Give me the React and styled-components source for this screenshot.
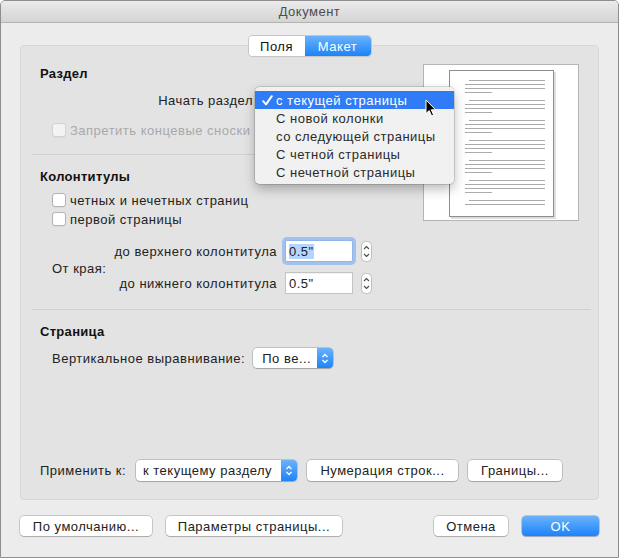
import React from 'react';
import styled, { createGlobalStyle } from 'styled-components';

const GlobalStyle = createGlobalStyle`
  html, body { margin: 0; padding: 0; background: #ffffff; }
  body {
    font-family: "Liberation Sans", Arial, sans-serif;
    font-size: 13px;
    letter-spacing: 0.5px;
    color: #222222;
  }
  * { box-sizing: border-box; }
`;

const startOptions = [
    'с текущей страницы',
    'С новой колонки',
    'со следующей страницы',
    'С четной страницы',
    'С нечетной страницы',
];

// page preview: 7 paragraphs, the last one cut short
const previewGroups = [4, 4, 4, 4, 4, 4, 2];

const Window = styled.div`
  width: 619px;
  height: 558px;
  border: 1px solid #8e8e8e;
  border-radius: 5px 5px 0 0;
  background: #ececec;
  display: flex;
  flex-direction: column;
  overflow: hidden;
`;

const TitleBar = styled.div`
  height: 22px;
  flex-shrink: 0;
  background: linear-gradient(#ebebeb, #d4d4d4);
  border-bottom: 1px solid #b3b3b3;
  display: flex;
  align-items: center;
  justify-content: center;
  color: #4d4d4d;
`;

const Body = styled.div`
  display: flex;
  flex-direction: column;
  padding: 13px 19px 0;
`;

const Tabs = styled.div`
  align-self: center;
  display: flex;
  height: 20px;
  margin-bottom: -11px;
  position: relative;
  z-index: 1;
  border-radius: 4px;
  overflow: hidden;
  background: #fff;
  box-shadow: 0 0 0 1px #c6c6c6, 0 1px 1px rgba(0, 0, 0, 0.12);
`;

const Tab = styled.div`
  width: ${p => p.$w}px;
  display: flex;
  align-items: center;
  justify-content: center;
  background: ${p => (p.$active ? 'linear-gradient(#6ab2fb, #1b83f9)' : '#ffffff')};
  color: ${p => (p.$active ? '#ffffff' : '#111111')};
`;

const GroupBox = styled.div`
  height: 455px;
  background: #e3e3e3;
  border: 1px solid #d7d7d7;
  border-radius: 4px;
  padding: 18px 7px 18px 11px;
  display: flex;
  flex-direction: column;
`;

const TopArea = styled.div`
  display: flex;
  align-items: flex-start;
`;

const LeftCol = styled.div`
  flex: 1;
  min-width: 0;
  display: flex;
  flex-direction: column;
`;

const Heading = styled.div`
  margin-left: 8px;
  margin-top: ${p => p.$mt || 0}px;
  line-height: 18px;
  font-weight: bold;
  letter-spacing: 0.3px;
  color: #111;
`;

const Row = styled.div`
  display: flex;
  align-items: center;
  height: ${p => p.$h || 22}px;
  margin-top: ${p => p.$mt || 0}px;
  margin-left: ${p => (p.$ml === undefined ? 20 : p.$ml)}px;
  gap: ${p => p.$gap || 0}px;
`;

const RightLabel = styled.div`
  flex-shrink: 0;
  width: ${p => (p.$w ? `${p.$w}px` : 'auto')};
  text-align: right;
  white-space: nowrap;
`;

const MenuAnchor = styled.div`
  position: relative;
  flex: 1;
  height: 22px;
  margin-left: 2px;
`;

const Menu = styled.div`
  position: absolute;
  left: 0;
  top: -2px;
  width: 199px;
  padding: 4px 0 3px;
  background: rgba(241, 241, 241, 0.98);
  border-radius: 5px;
  box-shadow: 0 0 0 1px rgba(0, 0, 0, 0.13), 0 5px 12px rgba(0, 0, 0, 0.28);
  z-index: 5;
`;

const MenuItem = styled.div`
  height: 18px;
  display: flex;
  align-items: center;
  padding-left: 7px;
  white-space: nowrap;
  background: ${p => (p.$active ? '#2f7cf6' : 'transparent')};
  color: ${p => (p.$active ? '#ffffff' : '#2a2a2a')};
`;

const Check = styled.span`
  width: 14px;
  flex-shrink: 0;
  display: flex;
  align-items: center;
`;

const Cursor = styled.svg`
  position: absolute;
  left: 170px;
  top: 12px;
`;

const CheckBox = styled.span`
  flex-shrink: 0;
  width: 14px;
  height: 14px;
  border-radius: 3px;
  border: 1px solid ${p => (p.$disabled ? '#d2d2d2' : '#b3b3b3')};
  background: ${p => (p.$disabled ? '#f3f3f3' : '#ffffff')};
  box-shadow: 0 1px 0 rgba(0, 0, 0, 0.04);
  margin-right: 4px;
`;

const CheckText = styled.span`
  white-space: nowrap;
  color: ${p => (p.$disabled ? '#a9a9a9' : '#222222')};
`;

const Separator = styled.div`
  height: 1px;
  background: #d0d0d0;
  margin-top: ${p => p.$mt || 0}px;
  margin-right: ${p => p.$mr || 0}px;
`;

const Margins = styled.div`
  display: grid;
  grid-template-columns: 54px 163px 68px 11px;
  grid-template-rows: 22px 22px;
  column-gap: 8px;
  row-gap: 10px;
  align-items: center;
  margin-left: 20px;
  margin-top: 12px;
`;

const EdgeLabel = styled.div`
  grid-row: 1 / span 2;
  grid-column: 1;
  white-space: nowrap;
  padding-top: 2px;
`;

const NumberField = styled.div`
  height: 22px;
  background: #fff;
  border: 1px solid ${p => (p.$focused ? '#8fb6ea' : '#c3c3c3')};
  box-shadow: ${p => (p.$focused ? '0 0 0 3px rgba(120, 170, 240, 0.6)' : 'inset 0 1px 0 rgba(0,0,0,0.05)')};
  border-radius: ${p => (p.$focused ? '2px' : '0')};
  display: flex;
  align-items: center;
  padding-left: 3px;
`;

const Selected = styled.span`
  background: ${p => (p.$on ? '#b4d5fe' : 'transparent')};
`;

const StepperBox = styled.svg`
  display: block;
`;

const PopupButton = styled.div`
  flex-shrink: 0;
  width: ${p => p.$w}px;
  height: ${p => p.$h || 21}px;
  display: flex;
  align-items: center;
  background: #fff;
  border-radius: 4px;
  box-shadow: 0 0 0 0.5px rgba(0, 0, 0, 0.3), 0 1px 1px rgba(0, 0, 0, 0.15);
  overflow: hidden;
`;

const PopupText = styled.span`
  flex: 1;
  padding-left: ${p => p.$pl || 7}px;
  white-space: nowrap;
`;

const PopupArrows = styled.span`
  width: 16px;
  align-self: stretch;
  display: flex;
  align-items: center;
  justify-content: center;
  background: linear-gradient(#6bb2fb, #1c84f9);
`;

const PushButton = styled.div`
  flex-shrink: 0;
  width: ${p => p.$w}px;
  height: ${p => p.$h || 21}px;
  display: flex;
  align-items: center;
  justify-content: center;
  border-radius: 4px;
  white-space: nowrap;
  background: ${p => (p.$primary ? 'linear-gradient(#6bb3fb, #1b83fa)' : '#ffffff')};
  color: ${p => (p.$primary ? '#ffffff' : '#222222')};
  box-shadow: ${p => (p.$primary
        ? '0 0 0 0.5px rgba(0, 60, 160, 0.45), 0 1px 1px rgba(0, 0, 0, 0.15)'
        : '0 0 0 0.5px rgba(0, 0, 0, 0.3), 0 1px 1px rgba(0, 0, 0, 0.15)')};
  margin-left: ${p => (p.$pushRight ? 'auto' : '0')};
`;

const ApplyRow = styled.div`
  display: flex;
  align-items: center;
  gap: 10px;
  margin-top: auto;
  margin-left: 8px;
  height: 21px;
`;

const ApplyLabel = styled.span`
  width: 86px;
  white-space: nowrap;
`;

const PreviewBox = styled.div`
  flex-shrink: 0;
  width: 156px;
  height: 157px;
  margin-right: 12px;
  background: #fff;
  border: 1px solid #b5b5b5;
  display: flex;
  justify-content: center;
  padding-top: 5px;
`;

const PreviewPage = styled.div`
  width: 105px;
  height: 147px;
  border: 1px solid #8d8d8d;
  box-shadow: 2px 2px 0 #dedede;
  background: #fff;
`;

const Footer = styled.div`
  display: flex;
  gap: 14px;
  margin-top: 16px;
`;

const Stepper = () => (
    <StepperBox width="11" height="21" viewBox="0 0 11 21">
        <rect x="0.5" y="0.5" width="10" height="20" rx="4" fill="#ffffff" stroke="#bdbdbd" />
        <path d="M3 8 L5.5 5.5 L8 8" fill="none" stroke="#4a4a4a" strokeWidth="1.1" />
        <path d="M3 13 L5.5 15.5 L8 13" fill="none" stroke="#4a4a4a" strokeWidth="1.1" />
    </StepperBox>
);

const WhiteArrows = () => (
    <svg width="8" height="13" viewBox="0 0 8 13">
        <path d="M1.5 5 L4 2.5 L6.5 5" fill="none" stroke="#ffffff" strokeWidth="1.3" />
        <path d="M1.5 8 L4 10.5 L6.5 8" fill="none" stroke="#ffffff" strokeWidth="1.3" />
    </svg>
);

const CheckMark = () => (
    <svg width="11" height="11" viewBox="0 0 11 11">
        <path d="M1.2 6.2 L4 9.3 L9.8 1.2" fill="none" stroke="#ffffff" strokeWidth="2" strokeLinecap="round" strokeLinejoin="round" />
    </svg>
);

const PageLines = () => {
    const lines = [];
    previewGroups.forEach((count, g) => {
        for (let i = 0; i < count; i++) {
            const y = 9.5 + g * 20 + i * 4;
            const x1 = i === 0 ? 19 : 15;
            const x2 = i === 3 ? 42 : 95;
            lines.push(<line key={`${g}_${i}`} x1={x1} x2={x2} y1={y} y2={y} stroke="#ababab" strokeWidth="1" />);
        }
    });
    return <svg width="103" height="145" viewBox="0 0 103 145">{lines}</svg>;
};

const App = () => {
    return (
        <>
            <GlobalStyle />
            <Window>
                <TitleBar>Документ</TitleBar>
                <Body>
                    <Tabs>
                        <Tab $w={56}>Поля</Tab>
                        <Tab $w={66} $active>Макет</Tab>
                    </Tabs>
                    <GroupBox>
                        <TopArea>
                            <LeftCol>
                                <Heading $mt={1}>Раздел</Heading>
                                <Row $mt={6}>
                                    <RightLabel $w={201}>Начать раздел</RightLabel>
                                    <MenuAnchor>
                                        <Menu>
                                            {startOptions.map((text, index) => (
                                                <MenuItem key={text} $active={index === 0}>
                                                    <Check>{index === 0 && <CheckMark />}</Check>
                                                    {text}
                                                </MenuItem>
                                            ))}
                                            <Cursor width="12" height="18" viewBox="0 0 12 18">
                                                <path d="M1 1 L1 14.5 L4.2 11.6 L6.6 16.8 L8.6 15.9 L6.3 10.8 L10.6 10.8 Z"
                                                      fill="#000" stroke="#fff" strokeWidth="1" strokeLinejoin="round" />
                                            </Cursor>
                                        </Menu>
                                    </MenuAnchor>
                                </Row>
                                <Row $h={18} $mt={10}>
                                    <CheckBox $disabled />
                                    <CheckText $disabled>Запретить концевые сноски</CheckText>
                                </Row>
                                <Separator $mt={15} $mr={12} />
                                <Heading $mt={13}>Колонтитулы</Heading>
                                <Row $h={18} $mt={5}>
                                    <CheckBox />
                                    <CheckText>четных и нечетных страниц</CheckText>
                                </Row>
                                <Row $h={18} $mt={1}>
                                    <CheckBox />
                                    <CheckText>первой страницы</CheckText>
                                </Row>
                                <Margins>
                                    <EdgeLabel>От края:</EdgeLabel>
                                    <RightLabel>до верхнего колонтитула</RightLabel>
                                    <NumberField $focused><Selected $on>0.5"</Selected></NumberField>
                                    <Stepper />
                                    <RightLabel>до нижнего колонтитула</RightLabel>
                                    <NumberField><Selected>0.5"</Selected></NumberField>
                                    <Stepper />
                                </Margins>
                            </LeftCol>
                            <PreviewBox>
                                <PreviewPage>
                                    <PageLines />
                                </PreviewPage>
                            </PreviewBox>
                        </TopArea>
                        <Separator $mt={15} />
                        <Heading $mt={13}>Страница</Heading>
                        <Row $mt={6} $gap={8}>
                            <span>Вертикальное выравнивание:</span>
                            <PopupButton $w={80} $h={20}>
                                <PopupText $pl={9}>По ве...</PopupText>
                                <PopupArrows><WhiteArrows /></PopupArrows>
                            </PopupButton>
                        </Row>
                        <ApplyRow>
                            <ApplyLabel>Применить к:</ApplyLabel>
                            <PopupButton $w={161}>
                                <PopupText>к текущему разделу</PopupText>
                                <PopupArrows><WhiteArrows /></PopupArrows>
                            </PopupButton>
                            <PushButton $w={151}>Нумерация строк...</PushButton>
                            <PushButton $w={94}>Границы...</PushButton>
                        </ApplyRow>
                    </GroupBox>
                    <Footer>
                        <PushButton $w={132} $h={20}>По умолчанию...</PushButton>
                        <PushButton $w={176} $h={20}>Параметры страницы...</PushButton>
                        <PushButton $w={74} $h={20} $pushRight>Отмена</PushButton>
                        <PushButton $w={77} $h={20} $primary>OK</PushButton>
                    </Footer>
                </Body>
            </Window>
        </>
    );
};

export default App;
